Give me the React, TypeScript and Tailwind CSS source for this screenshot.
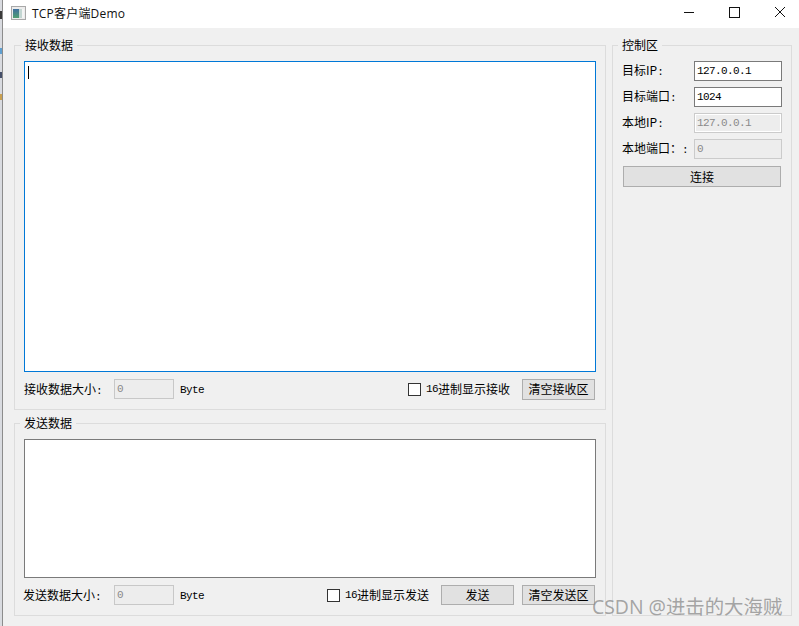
const cjk = "font-['Noto_Sans_CJK_SC',sans-serif]";
const mono = "font-['Liberation_Mono','Noto_Sans_CJK_SC',monospace] text-[11px] tracking-[-0.6px]";

function Group({ title, className, legend, children }: { title: string; className: string; legend: string; children: React.ReactNode }) {
  return (
    <div className={`relative border border-[#dcdcdc] ${className}`}>
      <span className={`absolute top-[-9px] bg-[#f0f0f0] px-[4px] text-[12px] leading-[16px] text-black ${legend}`}>{title}</span>
      {children}
    </div>
  );
}

function SizeField({ label, labelClass }: { label: string; labelClass: string }) {
  return (
    <>
      <span className={`whitespace-nowrap pt-[2px] text-[12px] ${labelClass}`}>
        {label}
        <span className={mono}>:</span>
      </span>
      <div className="flex h-[20px] w-[60px] items-center border border-[#c8c8c8] bg-[#ededed] pl-[2px] text-[#8a8a8a]">
        <span className={mono}>0</span>
      </div>
      <span className={`ml-[6px] pt-[2px] ${mono}`}>Byte</span>
    </>
  );
}

function HexCheck({ label, className }: { label: string; className: string }) {
  return (
    <div className={`flex items-center ${className}`}>
      <span className="h-[13px] w-[13px] border border-[#333] bg-white" />
      <span className={`ml-[5px] ${mono}`}>16</span>
      <span className="text-[12px]">{label}</span>
    </div>
  );
}

function Btn({ label, className }: { label: string; className: string }) {
  return (
    <div className={`flex items-center justify-center border border-[#adadad] bg-[#e1e1e1] text-[12px] ${className}`}>{label}</div>
  );
}

function Box({ value, disabled, inner }: { value: string; disabled?: boolean; inner?: boolean }) {
  return (
    <div
      className={`flex h-[20px] w-[88px] items-center border pl-[2px] ${
        disabled ? "border-[#cbcbcb] bg-[#ededed] text-[#8a8a8a]" : "border-[#7a7a7a] bg-white text-black"
      } ${inner ? "shadow-[inset_0_0_0_1px_#ffffff]" : ""}`}
    >
      <span className={mono}>{value}</span>
    </div>
  );
}

function ControlRow({ label, colon, children }: { label: string; colon: string; children: React.ReactNode }) {
  return (
    <div className="flex h-[20px] items-center">
      <span className="w-[72px] whitespace-nowrap text-[12px]">
        {label}
        <span className={mono}>{colon}</span>
      </span>
      {children}
    </div>
  );
}

export default function App() {
  return (
    <div className={`relative flex h-[626px] w-[799px] overflow-hidden bg-[#f0f0f0] text-black ${cjk}`}>
      {/* sliver of the window behind */}
      <div className="flex w-[3px] flex-col border-r border-[#8c8c8c] bg-[#d9dbe0]">
        <div className="mt-[11px] h-[8px] bg-[#3a3a3a]" />
        <div className="mt-[29px] h-[6px] bg-[#5f9fd0]" />
        <div className="mt-[18px] h-[6px] bg-[#46506a]" />
        <div className="mt-[16px] h-[6px] bg-[#c9a050]" />
      </div>
      <div className="flex flex-1 flex-col">
        <div className="flex h-[28px] items-center bg-white">
          <svg className="ml-[8px] mb-[2px]" width="15" height="14" viewBox="0 0 15 14">
            <defs>
              <linearGradient id="ico" x1="0" y1="0" x2="0" y2="1">
                <stop offset="0" stopColor="#3f6f9f" />
                <stop offset="1" stopColor="#4f9f70" />
              </linearGradient>
            </defs>
            <rect x="0.5" y="0.5" width="14" height="13" fill="#ececec" stroke="#a8a8a8" />
            <rect x="2" y="3" width="6" height="9" fill="url(#ico)" />
            <rect x="8" y="3" width="3" height="9" fill="#c3d6d2" />
            <rect x="11" y="3" width="2" height="9" fill="#f4f4f4" />
          </svg>
          <span className="ml-[6px] font-['Open_Sans','Noto_Sans_CJK_SC',sans-serif] text-[12px] tracking-[0.2px] text-[#111]">TCP客户端Demo</span>
          <svg className="ml-auto" width="113" height="28" viewBox="0 0 113 28" fill="none" stroke="#111" strokeWidth="1">
            <path d="M7 12.5H17" />
            <rect x="52.5" y="7.5" width="10" height="10" />
            <path d="M98 7L108 17M108 7L98 17" />
          </svg>
          <span className="w-[9px]" />
        </div>

        <div className="flex flex-1 gap-[6px] pl-[11px] pt-[17px]">
          <div className="flex w-[592px] flex-col gap-[13px]">
            <Group title="接收数据" legend="left-[6px]" className="h-[365px] px-[9px] pt-[15px]">
              <div className="h-[311px] border border-[#0078d7] bg-white pl-[3px] pt-[4px]">
                <div className="h-[13px] w-px bg-black" />
              </div>
              <div className="mt-[7px] flex h-[20px] items-center">
                <SizeField label="接收数据大小" labelClass="w-[90px]" />
                <HexCheck label="进制显示接收" className="ml-auto" />
                <Btn label="清空接收区" className="ml-[12px] mr-px h-[21px] w-[73px]" />
              </div>
            </Group>
            <Group title="发送数据" legend="left-[5px]" className="h-[193px] px-[9px] pt-[15px]">
              <div className="h-[139px] border border-[#7a7a7a] bg-white" />
              <div className="mt-[7px] flex h-[20px] items-center">
                <SizeField label="发送数据大小" labelClass="ml-[-1px] w-[91px]" />
                <HexCheck label="进制显示发送" className="ml-auto" />
                <Btn label="发送" className="ml-[12px] h-[20px] w-[73px]" />
                <Btn label="清空发送区" className="ml-[8px] mr-px h-[20px] w-[73px]" />
              </div>
            </Group>
          </div>

          <Group title="控制区" legend="left-[5px]" className="h-[571px] w-[180px] pl-[9px] pt-[15px]">
            <div className="flex flex-col gap-[6px]">
              <ControlRow label="目标IP" colon=":"><Box value="127.0.0.1" /></ControlRow>
              <ControlRow label="目标端口" colon=":"><Box value="1024" /></ControlRow>
              <ControlRow label="本地IP" colon=":"><Box value="127.0.0.1" disabled inner /></ControlRow>
              <ControlRow label="本地端口：" colon=":"><Box value="0" disabled /></ControlRow>
            </div>
            <Btn label="连接" className="ml-px mt-[7px] h-[21px] w-[158px]" />
          </Group>
        </div>
      </div>

      <span className="absolute left-[592px] top-[594px] font-['Open_Sans','Noto_Sans_CJK_SC',sans-serif] text-[19.4px] leading-[26px] text-[#8f8f8f]/80">CSDN @进击的大海贼</span>
    </div>
  );
}
